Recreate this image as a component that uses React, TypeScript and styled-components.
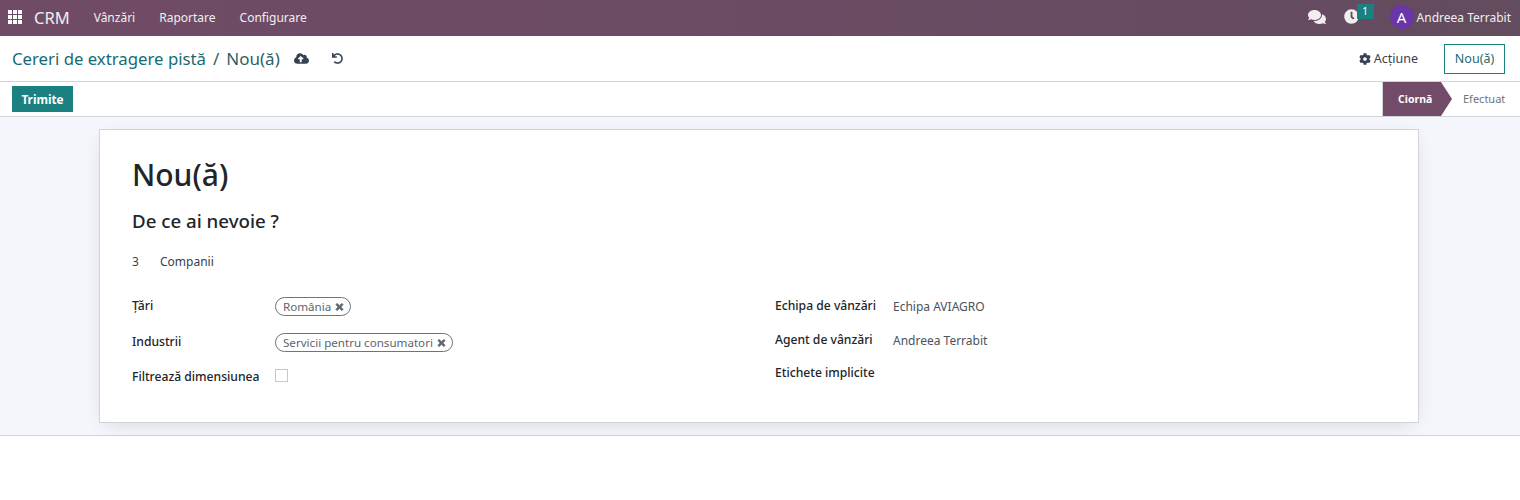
import React from "react";
import styled, { createGlobalStyle } from "styled-components";
import { FaComments, FaCloudUploadAlt, FaUndo, FaCog, FaTimes, FaClock } from "react-icons/fa";

const Global = createGlobalStyle`
  html, body { margin: 0; padding: 0; background: #fff; }
  body { font-family: "Noto Sans", "Open Sans", sans-serif; font-size: 12px; color: #212529; }
`;

const Page = styled.div`
  width: 1520px;
  display: flex;
  flex-direction: column;
`;

const NavBar = styled.header`
  height: 36px;
  box-sizing: border-box;
  display: flex;
  align-items: center;
  background: linear-gradient(90deg, #704b66 0%, #6c4b64 45%, #634c5e 100%);
  color: #fff;
  padding: 0 9px 2px 8px;
`;

const AppsSvg = styled.svg`
  width: 14px;
  height: 14px;
  fill: #fff;
`;

const Brand = styled.span`
  font-size: 16.5px;
  margin-left: 12px;
  margin-right: 12px;
  color: #f1eef0;
`;

const NavItem = styled.span`
  font-size: 12px;
  color: #f1eef0;
  padding: 0 12px;
`;

const NavRight = styled.div`
  margin-left: auto;
  display: flex;
  align-items: center;
`;

const ChatIcon = styled(FaComments)`
  width: 18px;
  height: 16px;
  color: #f1eef0;
  margin-right: 18px;
`;

const ActivityWrap = styled.div`
  position: relative;
  width: 16px;
  height: 16px;
  margin-right: 30px;
`;

const ClockIcon = styled(FaClock)`
  width: 15px;
  height: 15px;
  color: #f1eef0;
`;

const Badge = styled.span`
  position: absolute;
  left: 13px;
  top: -5px;
  width: 17px;
  height: 15px;
  background: #1a8080;
  color: #fff;
  font-size: 10px;
  line-height: 14px;
  text-align: center;
`;

const Avatar = styled.span`
  width: 24px;
  height: 24px;
  border-radius: 50%;
  background: #6a35a8;
  color: #fff;
  font-size: 15px;
  line-height: 25px;
  text-align: center;
  margin-right: 3px;
`;

const UserName = styled.span`
  font-size: 12px;
  color: #f1eef0;
`;

const ControlPanel = styled.div`
  height: 46px;
  box-sizing: border-box;
  display: flex;
  align-items: center;
  padding: 0 15px 0 12px;
  background: #fff;
  border-bottom: 1px solid #ced4da;
`;

const Breadcrumb = styled.span`
  font-size: 16.75px;
  color: #176b75;
`;

const Slash = styled.span`
  font-size: 17px;
  color: #2f5f68;
  margin: 0 7px;
`;

const Current = styled.span`
  font-size: 17px;
  color: #2f5f68;
`;

const SaveIcon = styled(FaCloudUploadAlt)`
  width: 15px;
  height: 15px;
  color: #374151;
  margin-left: 14px;
`;

const DiscardIcon = styled(FaUndo)`
  width: 11px;
  height: 11px;
  color: #374151;
  margin-left: 23px;
`;

const PanelRight = styled.div`
  margin-left: auto;
  display: flex;
  align-items: center;
`;

const ActionLabel = styled.span`
  display: flex;
  align-items: center;
  gap: 3px;
  font-size: 12.5px;
  color: #374151;
  margin-right: 26px;
`;

const GearIcon = styled(FaCog)`
  width: 12px;
  height: 12px;
  color: #374151;
`;

const NewButton = styled.button`
  width: 61px;
  height: 30px;
  padding: 0;
  background: #fff;
  border: 1px solid #1a8080;
  border-radius: 0;
  color: #176b75;
  font: inherit;
  font-size: 12.5px;
`;

const StatusBar = styled.div`
  height: 35px;
  box-sizing: border-box;
  display: flex;
  align-items: stretch;
  padding-left: 12px;
  background: #fff;
  border-bottom: 1px solid #ced4da;
`;

const SubmitButton = styled.button`
  align-self: flex-start;
  margin-top: 4px;
  width: 61px;
  height: 26px;
  padding: 0;
  border: 0;
  background: #1a8080;
  color: #fff;
  font: inherit;
  font-size: 11.8px;
  font-weight: 700;
`;

const Steps = styled.div`
  margin-left: auto;
  display: flex;
  align-items: stretch;
`;

const ActiveStep = styled.span`
  width: 70px;
  box-sizing: border-box;
  background: #714b67;
  color: #fff;
  font-size: 10.5px;
  font-weight: 700;
  display: flex;
  align-items: center;
  padding-left: 15px;
  clip-path: polygon(0 0, 59px 0, 100% 50%, 59px 100%, 0 100%);
  border-left: 1px solid #ced4da;
`;

const IdleStep = styled.span`
  width: 68px;
  box-sizing: border-box;
  color: #6c757d;
  font-size: 11px;
  display: flex;
  align-items: center;
  padding: 0 0 2px 11px;
`;

const Workspace = styled.main`
  height: 319px;
  box-sizing: border-box;
  padding: 12px 101px 12px 99px;
  background: #f5f6fb;
  border-bottom: 1px solid #ced4da;
`;

const Sheet = styled.section`
  height: 294px;
  box-sizing: border-box;
  background: #fff;
  border: 1px solid #ced4da;
  box-shadow: 0 5px 20px -6px rgba(0, 0, 0, 0.15);
  padding: 21px 32px 0;
`;

const Title = styled.h1`
  margin: 0;
  font-size: 30px;
  line-height: 48px;
  font-weight: 500;
  color: #212529;
`;

const Subtitle = styled.h2`
  margin: 9px 0 0;
  font-size: 18.7px;
  line-height: 25px;
  font-weight: 500;
  color: #212529;
`;

const CountRow = styled.div`
  display: flex;
  margin-top: 20px;
  line-height: 17px;
  color: #374151;
  font-size: 12px;
`;

const CountValue = styled.span`
  width: 28px;
`;

const Columns = styled.div`
  display: grid;
  grid-template-columns: 643px 1fr;
  margin-top: 27px;
`;

const Column = styled.div`
  display: flex;
  flex-direction: column;
`;

const Field = styled.div<{ $h: number; $labelW: number }>`
  height: ${(p) => p.$h}px;
  display: grid;
  grid-template-columns: ${(p) => p.$labelW}px 1fr;
  align-items: flex-start;
`;

const Label = styled.span`
  font-size: 12.15px;
  font-weight: 500;
  line-height: 17px;
  color: #212529;
`;

const Value = styled.span`
  font-size: 12px;
  line-height: 17px;
  margin-top: 1px;
  color: #4a5260;
`;

const Tag = styled.span`
  display: inline-flex;
  align-items: center;
  justify-self: start;
  height: 19px;
  box-sizing: border-box;
  padding: 0 6px 0 7px;
  border: 1px solid #6c757d;
  border-radius: 10px;
  font-size: 11.6px;
  color: #5c6570;
  gap: 4px;
`;

const CloseIcon = styled(FaTimes)`
  width: 9px;
  height: 10px;
  color: #5c6570;
  stroke: currentColor;
  stroke-width: 40px;
`;

const Check = styled.span`
  width: 13px;
  height: 13px;
  box-sizing: border-box;
  border: 1px solid #c4c8ce;
  background: #fff;
  margin-top: 1px;
`;

const AppsIcon = () => (
  <AppsSvg viewBox="0 0 14 14">
    {[0, 5, 10].map((y) =>
      [0, 5, 10].map((x) => <rect key={`${x}-${y}`} x={x} y={y} width="4" height="4" />)
    )}
  </AppsSvg>
);

export default function App() {
  return (
    <Page>
      <Global />
      <NavBar>
        <AppsIcon />
        <Brand>CRM</Brand>
        <NavItem>Vânzări</NavItem>
        <NavItem>Raportare</NavItem>
        <NavItem>Configurare</NavItem>
        <NavRight>
          <ChatIcon />
          <ActivityWrap>
            <ClockIcon />
            <Badge>1</Badge>
          </ActivityWrap>
          <Avatar>A</Avatar>
          <UserName>Andreea Terrabit</UserName>
        </NavRight>
      </NavBar>
      <ControlPanel>
        <Breadcrumb>Cereri de extragere pistă</Breadcrumb>
        <Slash>/</Slash>
        <Current>Nou(ă)</Current>
        <SaveIcon />
        <DiscardIcon />
        <PanelRight>
          <ActionLabel>
            <GearIcon />
            Acțiune
          </ActionLabel>
          <NewButton>Nou(ă)</NewButton>
        </PanelRight>
      </ControlPanel>
      <StatusBar>
        <SubmitButton>Trimite</SubmitButton>
        <Steps>
          <ActiveStep>Ciornă</ActiveStep>
          <IdleStep>Efectuat</IdleStep>
        </Steps>
      </StatusBar>
      <Workspace>
        <Sheet>
          <Title>Nou(ă)</Title>
          <Subtitle>De ce ai nevoie ?</Subtitle>
          <CountRow>
            <CountValue>3</CountValue>
            <span>Companii</span>
          </CountRow>
          <Columns>
            <Column>
              <Field $h={36} $labelW={143}>
                <Label>Țări</Label>
                <Tag>
                  România
                  <CloseIcon />
                </Tag>
              </Field>
              <Field $h={35} $labelW={143}>
                <Label>Industrii</Label>
                <Tag>
                  Servicii pentru consumatori
                  <CloseIcon />
                </Tag>
              </Field>
              <Field $h={30} $labelW={143}>
                <Label>Filtrează dimensiunea</Label>
                <Check />
              </Field>
            </Column>
            <Column>
              <Field $h={34} $labelW={118}>
                <Label>Echipa de vânzări</Label>
                <Value>Echipa AVIAGRO</Value>
              </Field>
              <Field $h={33} $labelW={118}>
                <Label>Agent de vânzări</Label>
                <Value>Andreea Terrabit</Value>
              </Field>
              <Field $h={30} $labelW={118}>
                <Label>Etichete implicite</Label>
              </Field>
            </Column>
          </Columns>
        </Sheet>
      </Workspace>
    </Page>
  );
}
